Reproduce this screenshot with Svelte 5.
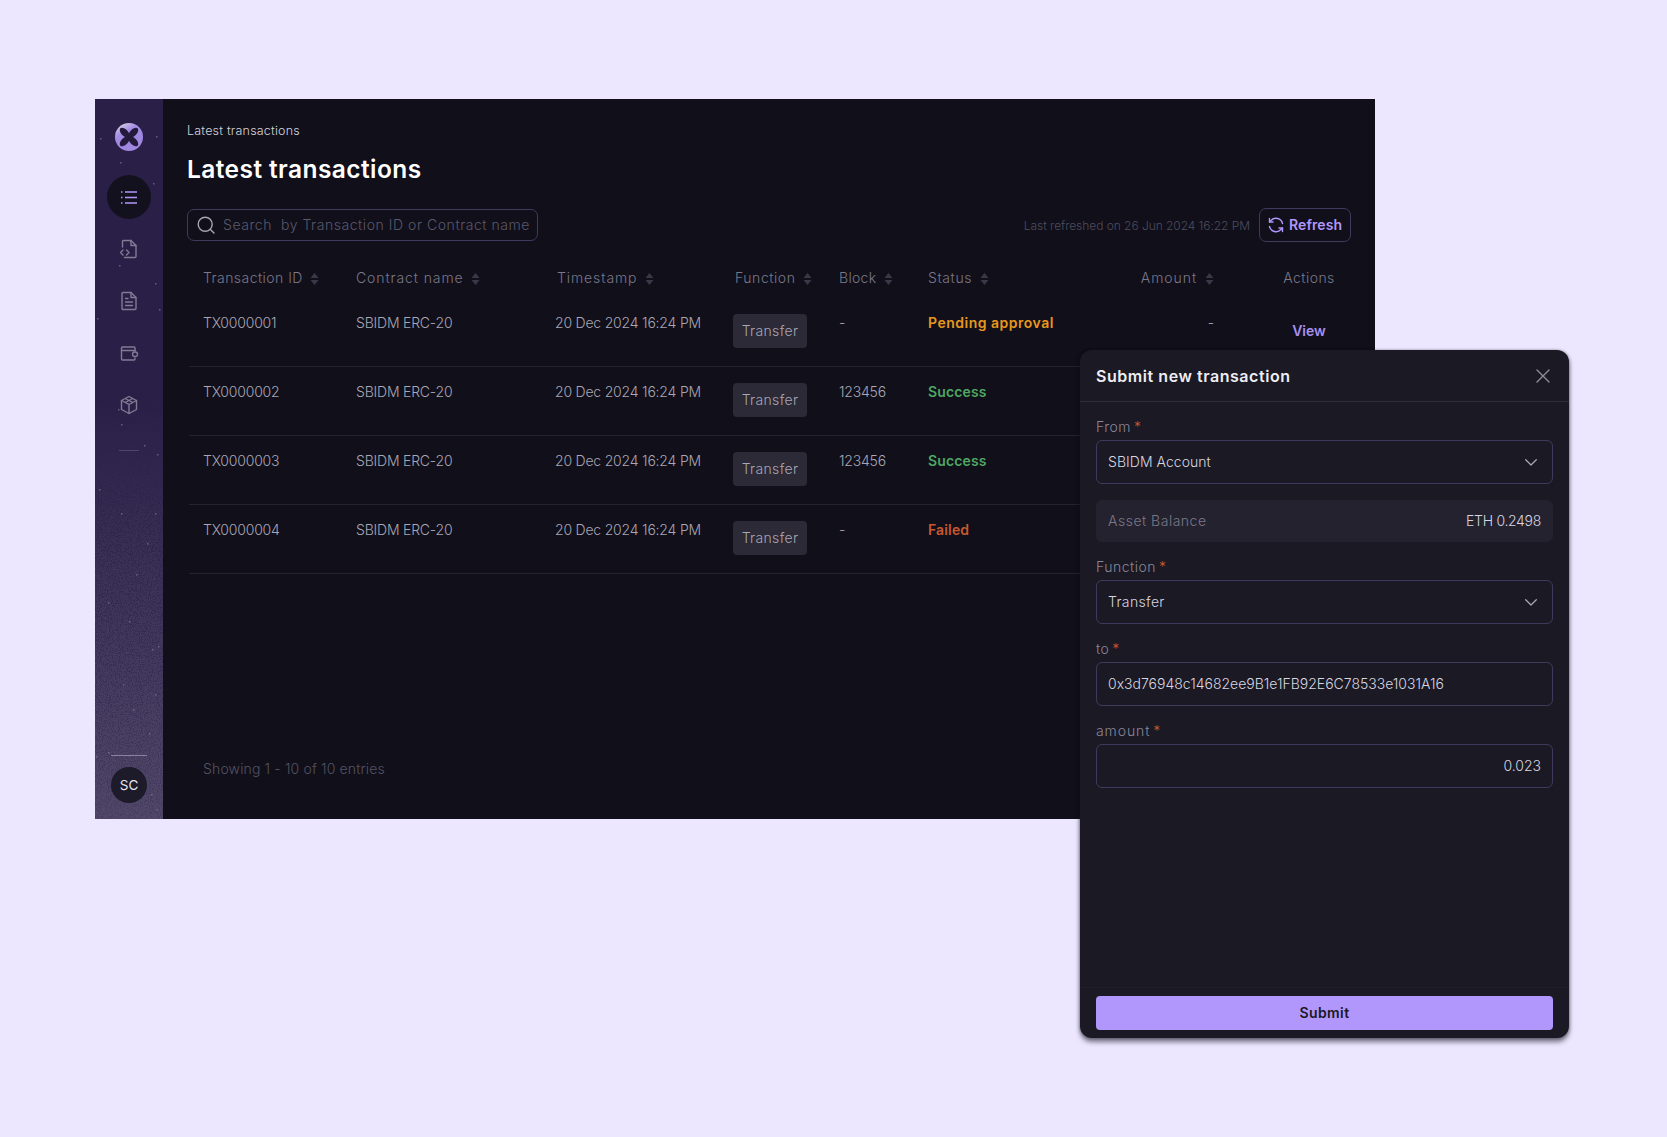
<script>
  const columns = [
    { label: 'Transaction ID', spacing: 0.45 },
    { label: 'Contract name', spacing: 0.9 },
    { label: 'Timestamp', spacing: 0.9, nudge: true },
    { label: 'Function', spacing: 0.55, nudge: true },
    { label: 'Block', spacing: 0.3 },
    { label: 'Status', spacing: 0.6 }
  ];

  // only the first row's amount and action stick out from behind the drawer
  const rows = [
    { id: 'TX0000001', block: '-', status: 'Pending approval', tone: 'pending', amount: '-', action: 'View' },
    { id: 'TX0000002', block: '123456', status: 'Success', tone: 'success' },
    { id: 'TX0000003', block: '123456', status: 'Success', tone: 'success' },
    { id: 'TX0000004', block: '-', status: 'Failed', tone: 'failed' }
  ];

  // little specks on the sidebar, [x, y] inside the 68x720 rail
  const stars = [
    [5, 39], [61, 37], [25, 63], [58, 84], [24, 166], [60, 184], [2, 219], [64, 210],
    [23, 310], [26, 325], [49, 346], [4, 390], [62, 355], [26, 414], [60, 414],
    [41, 475], [52, 444], [13, 503], [34, 522], [57, 550], [38, 610], [60, 595],
    [63, 547], [28, 585], [54, 634], [13, 653], [34, 656], [1, 657], [61, 710], [56, 695]
  ];
</script>

{#snippet sortIcon()}
  <svg class="sort" width="9" height="12" viewBox="0 0 9 12"><path d="M4.500 0 8.500 5H.5zM4.500 12 .5 7h8z" /></svg>
{/snippet}

<div class="page">
  <div class="window">
    <aside class="rail">
      <svg class="grain" width="68" height="720">
        <defs>
          <filter id="dither" x="0" y="0" width="100%" height="100%" color-interpolation-filters="sRGB">
            <feTurbulence type="fractalNoise" baseFrequency="0.9" numOctaves="2" seed="4" />
            <feColorMatrix values="0 0 0 0 0.17  0 0 0 0 0.13  0 0 0 0 0.29  0 0 0 9 -4.4" />
          </filter>
          <linearGradient id="fade" x1="0" y1="0" x2="0" y2="1">
            <stop offset="0.4" stop-color="#000" />
            <stop offset="0.56" stop-color="#bbb" />
            <stop offset="1" stop-color="#444" />
          </linearGradient>
          <mask id="grainMask"><rect width="68" height="720" fill="url(#fade)" /></mask>
        </defs>
        <rect width="68" height="720" filter="url(#dither)" mask="url(#grainMask)" />
        {#each stars as [x, y]}
          <rect {x} {y} width="1.500" height="1.500" fill="#7f7799" opacity="0.7" />
        {/each}
      </svg>

      <svg class="logo" width="28" height="28" viewBox="0 0 28 28">
        <defs>
          <linearGradient id="logoFill" x1="0.2" y1="0" x2="0.6" y2="0.7">
            <stop offset="0" stop-color="#d6d2e2" />
            <stop offset="0.45" stop-color="#a48ce4" />
            <stop offset="1" stop-color="#9f87e2" />
          </linearGradient>
        </defs>
        <circle cx="14" cy="14" r="14" fill="url(#logoFill)" />
        <g fill="#241a3c">
          <circle cx="14" cy="14" r="3" />
          <ellipse cx="9.600" cy="9.600" rx="6" ry="3.300" transform="rotate(45 9.600 9.600)" />
          <ellipse cx="18.400" cy="9.600" rx="6" ry="3.300" transform="rotate(-45 18.400 9.600)" />
          <ellipse cx="9.600" cy="18.400" rx="6" ry="3.300" transform="rotate(-45 9.600 18.400)" />
          <ellipse cx="18.400" cy="18.400" rx="6" ry="3.300" transform="rotate(45 18.400 18.400)" />
        </g>
      </svg>

      <nav class="nav">
        <span class="nav-item active">
          <svg width="16" height="13" viewBox="0 0 16 13" fill="none" stroke="#b197fc" stroke-width="1.500">
            <path d="M4 1h12M4 6.500h12M4 12h12" />
            <path d="M0 1h1.500M0 6.500h1.500M0 12h1.500" />
          </svg>
        </span>
        <span class="nav-item">
          <svg width="20" height="20" viewBox="0 0 20 20" fill="none" stroke="#827b94" stroke-width="1.400" stroke-linejoin="round" stroke-linecap="round">
            <path d="M3.500 8V2.500a1 1 0 0 1 1-1h7.500l5 5v11a1 1 0 0 1-1 1H5.500" />
            <path d="M12 1.500v5h5" />
            <path d="M4 11 1.500 13.500 4 16M7.500 11 10 13.500 7.500 16" />
          </svg>
        </span>
        <span class="nav-item">
          <svg width="20" height="20" viewBox="0 0 20 20" fill="none" stroke="#827b94" stroke-width="1.400" stroke-linejoin="round" stroke-linecap="round">
            <path d="M3 2.500a1 1 0 0 1 1-1h8l5 5v11a1 1 0 0 1-1 1H4a1 1 0 0 1-1-1z" />
            <path d="M12 1.500v5h5M6.500 7.500h2.500M6.500 11h7M6.500 14.500h7" />
          </svg>
        </span>
        <span class="nav-item">
          <svg width="20" height="20" viewBox="0 0 20 20" fill="none" stroke="#827b94" stroke-width="1.400" stroke-linejoin="round" stroke-linecap="round">
            <path d="M16 8V5a1 1 0 0 0-1-1H3.500a1 1 0 0 0-1 1v11a1 1 0 0 0 1 1H15a1 1 0 0 0 1-1v-1" />
            <path d="M2.500 7.500h13.500" />
            <rect x="13.500" y="9" width="5" height="4.500" rx="2.200" />
          </svg>
        </span>
        <span class="nav-item">
          <svg width="20" height="20" viewBox="0 0 20 20" fill="none" stroke="#827b94" stroke-width="1.400" stroke-linejoin="round" stroke-linecap="round">
            <path d="M10 1.500 17.500 5.500v9L10 18.500l-7.500-4v-9z" />
            <path d="M2.500 5.500 10 9.500l7.500-4M10 9.500v9M6.200 3.500 13.800 7.500M13.800 3.500 6.200 7.500" />
          </svg>
        </span>
      </nav>

      <hr class="rail-line short" />
      <div class="rail-bottom">
        <hr class="rail-line wide" />
        <div class="avatar">SC</div>
      </div>
    </aside>

    <main class="main">
      <div class="crumb">Latest transactions</div>
      <h1>Latest transactions</h1>

      <div class="toolbar">
        <label class="search">
          <svg width="18" height="18" viewBox="0 0 18 18" fill="none" stroke="#a9a6b5" stroke-width="1.400" stroke-linecap="round">
            <circle cx="8.200" cy="8.200" r="7" />
            <path d="m13.400 13.400 3.600 3.600" />
          </svg>
          <span>Search&nbsp; by Transaction ID or Contract name</span>
        </label>
        <span class="refreshed">Last refreshed on 26 Jun 2024 16:22 PM</span>
        <button class="refresh">
          <svg width="16" height="16" viewBox="0 0 16 16" fill="none" stroke="#b197fc" stroke-width="1.400" stroke-linecap="round" stroke-linejoin="round">
            <path d="M14.500 6.500A6.700 6.700 0 0 0 3 3.500L1.500 5V1.500" />
            <path d="M1.500 9.500A6.700 6.700 0 0 0 13 12.500l1.500-1.500v3.500" />
            <path d="M1.500 5H5M14.500 11H11" />
          </svg>
          <span class="lift">Refresh</span>
        </button>
      </div>

      <div class="table">
        <div class="row head">
          {#each columns as col}
            <span class="cell" class:nudge={col.nudge} style="letter-spacing: {col.spacing}px">{col.label} {@render sortIcon()}</span>
          {/each}
          <span class="cell amount amount-head">Amount {@render sortIcon()}</span>
          <span class="cell action">Actions</span>
        </div>
        {#each rows as row}
          <div class="row">
            <span class="cell">{row.id}</span>
            <span class="cell">SBIDM ERC-20</span>
            <span class="cell">20 Dec 2024 16:24 PM</span>
            <span class="cell"><span class="pill">Transfer</span></span>
            <span class="cell">{row.block}</span>
            <span class="cell status {row.tone}">{row.status}</span>
            <span class="cell amount">{row.amount ?? ''}</span>
            <span class="cell action">
              {#if row.action}<span class="view">{row.action}</span>{/if}
            </span>
          </div>
        {/each}
      </div>

      <div class="entries">Showing 1 - 10 of 10 entries</div>
    </main>
  </div>

  <section class="drawer">
    <header class="drawer-head">
      <h2>Submit new transaction</h2>
      <svg width="14" height="14" viewBox="0 0 14 14" fill="none" stroke="#8f8c9c" stroke-width="1.400" stroke-linecap="round">
        <path d="M1 1l12 12M13 1 1 13" />
      </svg>
    </header>

    <div class="form">
      <div class="field">
        <span class="label">From<i>*</i></span>
        <div class="input select">
          <span class="lift">SBIDM Account</span>
          <svg width="12" height="7" viewBox="0 0 12 7" fill="none" stroke="#a9a6b5" stroke-width="1.300" stroke-linecap="round" stroke-linejoin="round"><path d="m.7.7 5.300 5.300 5.300-5.300" /></svg>
        </div>
      </div>
      <div class="balance">
        <span class="lift">Asset Balance</span>
        <b class="lift">ETH 0.2498</b>
      </div>
      <div class="field">
        <span class="label">Function<i>*</i></span>
        <div class="input select">
          <span class="lift wide">Transfer</span>
          <svg width="12" height="7" viewBox="0 0 12 7" fill="none" stroke="#a9a6b5" stroke-width="1.300" stroke-linecap="round" stroke-linejoin="round"><path d="m.7.7 5.300 5.300 5.300-5.300" /></svg>
        </div>
      </div>
      <div class="field">
        <span class="label">to<i>*</i></span>
        <div class="input"><span class="lift">0x3d76948c14682ee9B1e1FB92E6C78533e1031A16</span></div>
      </div>
      <div class="field">
        <span class="label amount-label">amount<i>*</i></span>
        <div class="input right"><span class="lift">0.023</span></div>
      </div>
    </div>

    <footer class="drawer-foot">
      <button class="submit"><span class="lift">Submit</span></button>
    </footer>
  </section>
</div>

<style>
  :global(body) {
    background: #ece7ff;
  }

  .page {
    position: relative;
    width: 1667px;
    height: 1137px;
    padding: 99px 0 0 95px;
    box-sizing: border-box;
    background: #ece7ff;
    font-family: Inter, "Open Sans", sans-serif;
    overflow: hidden;
  }

  .window {
    display: flex;
    width: 1280px;
    height: 720px;
    background: #100f1a;
  }

  /* the font sits a touch lower than the design's, pull it up */
  .lift {
    position: relative;
    top: -1px;
  }

  /* sidebar */
  .rail {
    position: relative;
    flex: none;
    display: flex;
    flex-direction: column;
    align-items: center;
    width: 68px;
    padding-top: 24px;
    box-sizing: border-box;
    background: linear-gradient(180deg, #2a1f47 0%, #2a1f47 42%, #3b3156 64%, #524869 100%);
  }
  .grain {
    position: absolute;
    inset: 0;
  }
  .logo {
    position: relative;
    flex: none;
  }
  .nav {
    position: relative;
    display: flex;
    flex-direction: column;
    align-items: center;
    gap: 8px;
    margin-top: 24px;
  }
  .nav-item {
    display: flex;
    align-items: center;
    justify-content: center;
    width: 44px;
    height: 44px;
  }
  .nav-item.active {
    background: #14111f;
    border-radius: 50%;
  }
  .rail-line {
    position: relative;
    border: 0;
    height: 1px;
    margin: 0;
    background: #4f4668;
  }
  .rail-line.short {
    width: 20px;
    margin-top: 23px;
  }
  .rail-bottom {
    position: relative;
    display: flex;
    flex-direction: column;
    align-items: center;
    gap: 11px;
    margin-top: auto;
    padding-bottom: 16px;
  }
  .rail-line.wide {
    width: 36px;
    background: #8a829e;
  }
  .avatar {
    display: flex;
    align-items: center;
    justify-content: center;
    width: 36px;
    height: 36px;
    border-radius: 50%;
    background: #1d1a29;
    color: #e6e4ee;
    font-size: 13.500px;
  }

  /* main column */
  .main {
    flex: 1;
    display: flex;
    flex-direction: column;
    min-width: 0;
    padding: 22px 24px 40px;
  }
  .crumb {
    font-size: 12.500px;
    line-height: 20px;
    font-weight: 300;
    color: #d5d3dd;
    letter-spacing: 0.2px;
  }
  h1 {
    margin: 10px 0 0;
    font-size: 24.500px;
    line-height: 36px;
    font-weight: 600;
    color: #fff;
    letter-spacing: 0.42px;
  }
  .toolbar {
    display: flex;
    align-items: center;
    margin-top: 21px;
    height: 34px;
  }
  .search {
    display: flex;
    align-items: center;
    gap: 8px;
    width: 351px;
    height: 32px;
    padding-left: 9px;
    box-sizing: border-box;
    border: 1px solid #3f3a5c;
    border-radius: 7px;
    color: #5b586b;
    font-size: 14px;
    font-weight: 300;
    letter-spacing: 0.55px;
    white-space: nowrap;
    overflow: hidden;
  }
  .search span {
    position: relative;
    top: -1px;
  }
  .refreshed {
    margin-left: auto;
    font-size: 12px;
    font-weight: 300;
    color: #4f4c5e;
    letter-spacing: -0.05px;
  }
  .refresh {
    display: flex;
    align-items: center;
    gap: 5px;
    width: 92px;
    height: 34px;
    margin-left: 9px;
    padding: 0 0 0 8px;
    background: none;
    border: 1px solid #3f3a5c;
    border-radius: 7px;
    color: #b197fc;
    font: 600 14px Inter, sans-serif;
    letter-spacing: 0.1px;
  }

  /* table */
  .table {
    margin: 18px 0 0 2px;
  }
  .row {
    display: grid;
    grid-template-columns: 153px 199px 178px 106px 89px 202px 137px 84px;
    height: 69px;
    padding: 15px 0 0 14px;
    box-sizing: border-box;
    border-bottom: 1px solid #24232f;
    color: #a9a6b5;
    font-size: 14px;
    font-weight: 300;
    line-height: 20px;
    letter-spacing: -0.2px;
  }
  .row.head {
    height: 38px;
    padding-top: 8px;
    border: 0;
    color: #7b7889;
    letter-spacing: 0.45px;
  }
  .cell {
    white-space: nowrap;
  }
  .nudge {
    padding-left: 2px;
  }
  .sort {
    margin-left: 3px;
    vertical-align: -2px;
    fill: #3a3749;
  }
  .amount {
    padding-right: 53px;
    text-align: right;
  }
  .amount-head {
    letter-spacing: 0.95px;
  }
  .action {
    text-align: center;
  }
  .pill {
    display: inline-block;
    width: 74px;
    height: 34px;
    margin-top: 1px;
    line-height: 34px;
    text-align: center;
    border-radius: 4px;
    background: #2b2a36;
    letter-spacing: 0.35px;
  }
  .view {
    display: inline-block;
    padding-top: 8px;
    color: #a98fef;
    font-weight: 600;
    letter-spacing: 0;
  }
  .status {
    font-weight: 600;
    letter-spacing: 0.15px;
  }
  .pending { color: #e8971e; letter-spacing: 0.5px; }
  .success { color: #4fa862; }
  .failed { color: #c8582f; }
  .entries {
    margin-top: auto;
    padding-left: 16px;
    font-size: 14px;
    line-height: 20px;
    font-weight: 300;
    color: #555262;
    letter-spacing: 0.15px;
  }

  /* side drawer */
  .drawer {
    position: absolute;
    left: 1080px;
    top: 350px;
    display: flex;
    flex-direction: column;
    width: 489px;
    height: 688px;
    border-radius: 12px;
    background: #1a1924;
    box-shadow: 0 4px 5px rgba(20, 18, 30, 0.55), 1px 0 3px rgba(20, 18, 30, 0.2), -1px 0 3px rgba(20, 18, 30, 0.2);
  }
  .drawer-head {
    display: flex;
    align-items: center;
    justify-content: space-between;
    flex: none;
    height: 52px;
    padding: 0 19px 0 16px;
    box-sizing: border-box;
    border-bottom: 1px solid #2f2d3c;
  }
  h2 {
    margin: 0;
    font-size: 16px;
    font-weight: 600;
    color: #eeedf3;
    letter-spacing: 0.55px;
  }
  .form {
    display: flex;
    flex-direction: column;
    gap: 16px;
    padding: 16px;
  }
  .field {
    display: flex;
    flex-direction: column;
    gap: 4px;
  }
  .label {
    font-size: 14px;
    line-height: 18px;
    font-weight: 300;
    color: #8a8799;
    letter-spacing: 0.5px;
  }
  .amount-label {
    letter-spacing: 0.9px;
  }
  .label i {
    margin-left: 3px;
    font-style: normal;
    color: #c8582f;
  }
  .input {
    display: flex;
    align-items: center;
    justify-content: space-between;
    height: 44px;
    padding: 0 11px;
    box-sizing: border-box;
    border: 1px solid #3f3a5c;
    border-radius: 6px;
    color: #d8d6e0;
    font-size: 14px;
    font-weight: 300;
  }
  .input.select {
    padding-right: 15px;
    letter-spacing: 0.05px;
  }
  .input .wide {
    letter-spacing: 0.35px;
  }
  .input.right {
    justify-content: flex-end;
    padding-right: 11px;
  }
  .balance {
    display: flex;
    align-items: center;
    justify-content: space-between;
    height: 42px;
    padding: 0 12px;
    border-radius: 6px;
    background: #24222f;
    color: #7b7889;
    font-size: 14px;
    font-weight: 300;
    letter-spacing: 0.5px;
  }
  .balance b {
    color: #d8d6e0;
    font-weight: 300;
    letter-spacing: -0.3px;
  }
  .drawer-foot {
    margin-top: auto;
    padding: 8px 16px;
    border-top: 1px dotted #24232f;
  }
  .submit {
    display: block;
    width: 100%;
    height: 34px;
    border: 0;
    border-radius: 4px;
    background: #b197fc;
    color: #1a1924;
    font: 600 14px Inter, sans-serif;
    letter-spacing: 0.4px;
  }
</style>
